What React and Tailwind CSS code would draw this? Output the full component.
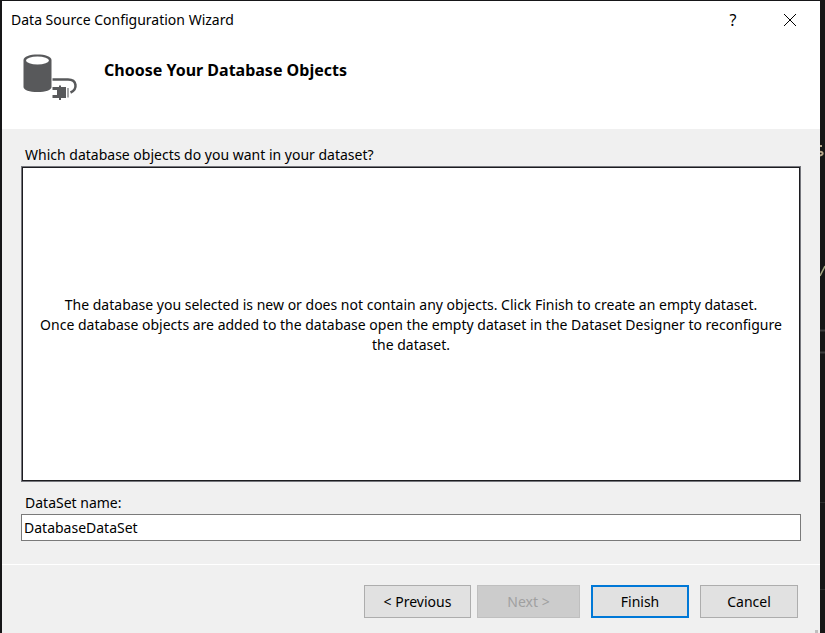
import React from "react";

function DatabaseIcon() {
  return (
    <svg width="56" height="48" viewBox="0 0 56 48" fill="none" aria-hidden="true">
      <path d="M.500 6C.500 2.500 7 .5 14.500 .5S28.500 2.500 28.500 6V33c0 3-6 5-14 5S.500 36 .500 33Z" fill="#58595b" />
      <ellipse cx="14.500" cy="6.500" rx="11.500" ry="4" fill="#fff" />
      <path d="M29.500 25.500H45C54 25.500 55 35 47.500 38.500" stroke="#58595b" strokeWidth="2.500" />
      <path d="M29.500 33h5v3h-5zM29.500 41h5v3h-5zM34 33h2v-1.500h2V33h5v11h-5v2h-2v-2h-2z" fill="#58595b" />
      <path d="M45 34v9.500" stroke="#8a8b8c" strokeWidth="1.500" />
    </svg>
  );
}

function TitleBar() {
  return (
    <div className="flex h-9 items-center pt-px pl-[9px] pr-[14px] text-sm">
      <h1 className="flex-1">Data Source Configuration Wizard</h1>
      <button type="button" aria-label="Help" className="mr-[25px] h-8 w-8 text-base">
        ?
      </button>
      <button type="button" aria-label="Close" className="flex h-8 w-8 items-center justify-center">
        <svg width="12" height="12" viewBox="0 0 12 12" stroke="#000" aria-hidden="true">
          <path d="M0 0L12 12M12 0L0 12" />
        </svg>
      </button>
    </div>
  );
}

function BackgroundEditor() {
  return (
    <div className="relative w-[5px] shrink-0 overflow-hidden bg-[#161616]" aria-hidden="true">
      <svg width="5" height="633" viewBox="0 0 5 633" fill="none">
        <path d="M0 146h2M0 152c3-1 4 3 0 3.500" stroke="#b9a78a" strokeWidth="2" />
        <path d="M0 276L5 266" stroke="#a6a884" strokeWidth="1.500" />
        <path d="M0 330.500h5M0 352.500h5" stroke="#3c3c3c" strokeWidth="2" />
        <path d="M0 502.500h5M0 589.500h5" stroke="#2c2c2c" />
      </svg>
    </div>
  );
}

const buttonBase = "h-[33px] border text-sm";

export default function App() {
  return (
    <div className="flex min-h-screen bg-[#161618] font-['Noto_Sans','Open_Sans',sans-serif] text-black">
      <main className="relative ml-[2px] mt-px flex flex-1 flex-col bg-[#f0f0f0]">
        <header className="h-32 bg-white">
          <TitleBar />
          <div className="flex pl-[21px] pt-[17px]">
            <DatabaseIcon />
            <h2 className="ml-[25px] mt-1 text-base leading-6 font-bold">Choose Your Database Objects</h2>
          </div>
        </header>

        <section className="flex flex-1 flex-col px-[19px] pt-4 pb-[23px] text-sm">
          <p className="pl-1 leading-5">Which database objects do you want in your dataset?</p>
          <div className="mt-px flex flex-1 border border-[#76777d]">
            <div className="flex flex-1 items-center justify-center border border-[#1c1c20] bg-white px-2 pt-[2px] text-center leading-5">
              <p>
                The database you selected is new or does not contain any objects. Click Finish to create an empty dataset.
                <br />
                Once database objects are added to the database open the empty dataset in the Dataset Designer to reconfigure
                the dataset.
              </p>
            </div>
          </div>
          <label htmlFor="dataset-name" className="mt-[11px] mb-px pl-1 leading-5">
            DataSet name:
          </label>
          <input
            id="dataset-name"
            type="text"
            defaultValue="DatabaseDataSet"
            className="h-[27px] border border-[#7a7a7a] bg-white px-[2px] outline-none"
          />
        </section>

        <footer className="flex h-[69px] justify-end border-t border-white pt-5 pr-[22px]">
          <button type="button" className={`${buttonBase} w-[107px] border-[#adadad] bg-[#e1e1e1]`}>
            &lt; Previous
          </button>
          <button type="button" disabled className={`${buttonBase} ml-[6px] w-[103px] border-[#bfbfbf] bg-[#cccccc] text-[#a0a0a0]`}>
            Next &gt;
          </button>
          <button type="button" className="ml-[11px] h-[33px] w-[98px] border-2 border-[#0078d7] bg-[#e1e1e1] text-sm">
            Finish
          </button>
          <button type="button" className={`${buttonBase} ml-[11px] w-[98px] border-[#adadad] bg-[#e1e1e1]`}>
            Cancel
          </button>
        </footer>
        <span className="absolute right-[2px] bottom-0 h-[3px] w-[3px] bg-[#bfbfbf]" />
      </main>
      <BackgroundEditor />
    </div>
  );
}
